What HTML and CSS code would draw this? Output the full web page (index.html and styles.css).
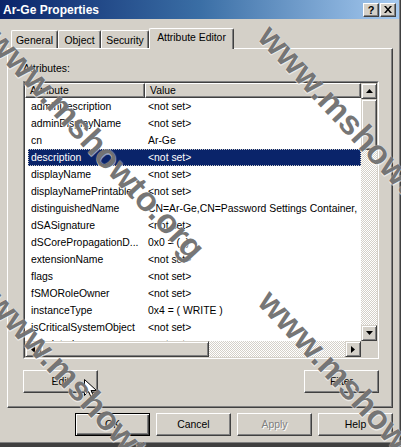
FILE: index.html
```html
<!DOCTYPE html>
<html>
<head>
<meta charset="utf-8">
<title>Ar-Ge Properties</title>
<link rel="stylesheet" href="styles.css">
</head>
<body>
<div class="window">
  <div class="titlebar">
    <span class="title">Ar-Ge Properties</span>
    <div class="caption-buttons">
      <div class="cap-btn cap-help">?</div>
      <div class="cap-btn"><svg width="8" height="7" viewBox="0 0 8 7"><path d="M0 0h2l2 2.5L6 0h2L5 3.5 8 7H6L4 4.5 2 7H0l3-3.5z" fill="#000"/></svg></div>
    </div>
  </div>

  <div class="tabs">
    <div class="tab tab-general">General</div>
    <div class="tab tab-object">Object</div>
    <div class="tab tab-security">Security</div>
    <div class="tab tab-attr active">Attribute Editor</div>
  </div>

  <div class="panel">
    <div class="label">Attributes:</div>
    <div class="listbox">
      <div class="lv">
        <div class="lv-main">
          <div class="lv-header">
            <div class="hcol hcol-attr">Attribute</div>
            <div class="hcol hcol-value">Value</div>
          </div>
          <div class="lv-rows">
            <div class="row"><span class="c1">adminDescription</span><span class="c2">&lt;not set&gt;</span></div>
            <div class="row"><span class="c1">adminDisplayName</span><span class="c2">&lt;not set&gt;</span></div>
            <div class="row"><span class="c1">cn</span><span class="c2">Ar-Ge</span></div>
            <div class="row selected"><span class="c1">description</span><span class="c2">&lt;not set&gt;</span></div>
            <div class="row"><span class="c1">displayName</span><span class="c2">&lt;not set&gt;</span></div>
            <div class="row"><span class="c1">displayNamePrintable</span><span class="c2">&lt;not set&gt;</span></div>
            <div class="row"><span class="c1">distinguishedName</span><span class="c2">CN=Ar-Ge,CN=Password Settings Container,</span></div>
            <div class="row"><span class="c1">dSASignature</span><span class="c2">&lt;not set&gt;</span></div>
            <div class="row"><span class="c1">dSCorePropagationD...</span><span class="c2">0x0 = (&nbsp;&nbsp;)</span></div>
            <div class="row"><span class="c1">extensionName</span><span class="c2">&lt;not set&gt;</span></div>
            <div class="row"><span class="c1">flags</span><span class="c2">&lt;not set&gt;</span></div>
            <div class="row"><span class="c1">fSMORoleOwner</span><span class="c2">&lt;not set&gt;</span></div>
            <div class="row"><span class="c1">instanceType</span><span class="c2">0x4 = ( WRITE )</span></div>
            <div class="row"><span class="c1">isCriticalSystemObject</span><span class="c2">&lt;not set&gt;</span></div>
            <div class="row"><span class="c1">isDeleted</span><span class="c2">&lt;not set&gt;</span></div>
          </div>
        </div>
        <div class="vscroll">
          <div class="sb-btn"><svg width="7" height="4" viewBox="0 0 7 4"><path d="M3.5 0L7 4H0z" fill="#000"/></svg></div>
          <div class="sb-thumb v-thumb"></div>
          <div class="sb-track"></div>
          <div class="sb-btn"><svg width="7" height="4" viewBox="0 0 7 4"><path d="M0 0h7L3.5 4z" fill="#000"/></svg></div>
        </div>
        <div class="hscroll">
          <div class="sb-btn"><svg width="4" height="7" viewBox="0 0 4 7"><path d="M4 0v7L0 3.5z" fill="#000"/></svg></div>
          <div class="sb-thumb h-thumb"></div>
          <div class="sb-track"></div>
          <div class="sb-btn"><svg width="4" height="7" viewBox="0 0 4 7"><path d="M0 0l4 3.5L0 7z" fill="#000"/></svg></div>
        </div>
        <div class="corner"></div>
      </div>
    </div>
    <div class="panel-buttons">
      <div class="btn">Edit</div>
      <div class="btn">Filter</div>
    </div>
  </div>

  <div class="dialog-buttons">
    <div class="btn default">OK</div>
    <div class="btn">Cancel</div>
    <div class="btn disabled">Apply</div>
    <div class="btn">Help</div>
  </div>
</div>

<svg class="cursor" width="13" height="21" viewBox="0 0 13 21"><path d="M0.5 0.5v16l4-4 3 6.5 2.5-1-3-6.5h5.5z" fill="#fff" stroke="#000" stroke-width="1"/></svg>

<div class="wm-layer">
  <div class="wm wm1">www.mshowto.org</div>
  <div class="wm wm2">www.mshowto.org</div>
  <div class="wm wm3">www.mshowto.org</div>
  <div class="wm wm4">www.mshowto.org</div>
</div>
</body>
</html>
```

FILE: styles.css
```css
* { box-sizing: border-box; }
html, body { margin: 0; padding: 0; }
body {
  width: 401px;
  height: 447px;
  overflow: hidden;
  position: relative;
  background: #404040;
  font-family: "Liberation Sans", Arial, sans-serif;
  font-size: 10.4px;
  color: #000;
}

.window {
  width: 400px;
  height: 443px;
  background: #d4d0c8;
  border-right: 1px solid #808080;
  border-bottom: 1px solid #808080;
  display: flex;
  flex-direction: column;
}

/* title bar */
.titlebar {
  height: 19px;
  flex: none;
  display: flex;
  align-items: center;
  padding: 0 3px;
  background: linear-gradient(to right, #0a246a 0%, #3a6ea5 50%, #a6caf0 100%);
}
.title {
  color: #fff;
  font-weight: bold;
  font-size: 12px;
}
.caption-buttons {
  margin-left: auto;
  display: flex;
  gap: 1px;
}
.cap-btn {
  width: 16px;
  height: 14px;
  background: #d4d0c8;
  border: 1px solid;
  border-color: #fff #404040 #404040 #fff;
  box-shadow: inset -1px -1px #808080;
  display: flex;
  align-items: center;
  justify-content: center;
}
.cap-help {
  font-weight: bold;
  font-size: 11px;
  line-height: 12px;
}

/* tabs */
.tabs {
  height: 20px;
  margin-top: 9px;
  flex: none;
  display: flex;
  align-items: flex-end;
  padding-left: 11px;
}
.tab {
  height: 18px;
  padding-top: 2px;
  line-height: 15px;
  text-align: center;
  border-top: 1px solid #fff;
  border-left: 1px solid #fff;
  border-right: 1px solid #404040;
  border-top-left-radius: 2px;
  border-top-right-radius: 2px;
  box-shadow: inset -1px 0 #808080;
  background: #d4d0c8;
  white-space: nowrap;
}
.tab-general { width: 47px; }
.tab-object { width: 43px; }
.tab-security { width: 48px; }
.tab-attr { width: 85px; }
.tab.active {
  height: 21px;
  margin-bottom: -1px;
  padding-top: 2px;
  line-height: 13px;
  position: relative;
  z-index: 2;
}

/* panel */
.panel {
  width: 386px;
  height: 360px;
  margin-left: 7px;
  flex: none;
  border: 1px solid;
  border-color: #fff #404040 #404040 #fff;
  box-shadow: inset -1px -1px #808080;
  padding: 13px 13px 0 15px;
  position: relative;
  z-index: 1;
}
.label {
  height: 13px;
  line-height: 13px;
}
.listbox {
  margin-top: 6px;
  width: 356px;
  height: 278px;
  border: 1px solid;
  border-color: #808080 #fff #fff #808080;
}
.lv {
  width: 100%;
  height: 100%;
  border: 1px solid;
  border-color: #404040 #d4d0c8 #d4d0c8 #404040;
  background: #fff;
  display: grid;
  grid-template-columns: 1fr 16px;
  grid-template-rows: 1fr 16px;
}
.lv-main {
  overflow: hidden;
  min-width: 0;
}
.lv-header {
  display: flex;
  height: 15px;
  width: 100%;
}
.hcol {
  height: 15px;
  line-height: 13px;
  padding-left: 4px;
  background: #d4d0c8;
  border: 1px solid;
  border-color: #fff #404040 #404040 #fff;
  box-shadow: inset -1px -1px #808080;
  white-space: nowrap;
}
.hcol-attr { width: 120px; flex: none; }
.hcol-value { flex: 1; }

.lv-rows { overflow: hidden; }
.row {
  display: flex;
  height: 17px;
  line-height: 17px;
  margin-left: 3px;
  white-space: nowrap;
}
.row .c1 {
  width: 115px;
  flex: none;
  padding-left: 3px;
}
.row .c2 {
  padding-left: 5px;
  flex: 1;
}
.row.selected {
  background: #0a246a;
  color: #fff;
  outline: 1px dotted #c8c8c8;
  outline-offset: -1px;
}

/* scrollbars */
.vscroll {
  display: flex;
  flex-direction: column;
  background: #d4d0c8;
}
.hscroll {
  display: flex;
  background: #d4d0c8;
}
.sb-btn {
  width: 16px;
  height: 16px;
  flex: none;
  background: #d4d0c8;
  border: 1px solid;
  border-color: #d4d0c8 #404040 #404040 #d4d0c8;
  box-shadow: inset 1px 1px #fff, inset -1px -1px #808080;
  display: flex;
  align-items: center;
  justify-content: center;
}
.sb-thumb {
  flex: none;
  background: #d4d0c8;
  border: 1px solid;
  border-color: #d4d0c8 #404040 #404040 #d4d0c8;
  box-shadow: inset 1px 1px #fff, inset -1px -1px #808080;
}
.v-thumb { height: 51px; }
.h-thumb { width: 168px; }
.sb-track {
  flex: 1;
  background: repeating-conic-gradient(#fff 0 25%, #d4d0c8 0 50%) 0 0 / 2px 2px;
}
.corner { background: #d4d0c8; }

/* buttons */
.panel-buttons {
  margin-top: 11px;
  display: flex;
  justify-content: space-between;
  width: 356px;
}
.btn {
  width: 75px;
  height: 23px;
  background: #d4d0c8;
  border: 1px solid;
  border-color: #fff #404040 #404040 #fff;
  box-shadow: inset -1px -1px #808080;
  display: flex;
  align-items: center;
  justify-content: center;
  white-space: nowrap;
}
.btn.default {
  border-color: #000;
  box-shadow: inset 1px 1px #fff, inset -1px -1px #404040, inset -2px -2px #808080;
}
.btn.disabled {
  color: #808080;
  text-shadow: 1px 1px #fff;
}
.dialog-buttons {
  margin-top: 5px;
  display: flex;
  justify-content: flex-end;
  gap: 6px;
  padding-right: 6px;
}

/* overlays */
.cursor {
  position: absolute;
  left: 84px;
  top: 379px;
  z-index: 5;
}
.wm-layer {
  position: absolute;
  left: 0;
  top: 0;
  width: 401px;
  height: 447px;
  overflow: hidden;
  z-index: 10;
  pointer-events: none;
}
.wm {
  position: absolute;
  font-family: "Liberation Sans", Arial, sans-serif;
  font-weight: bold;
  font-size: 34px;
  line-height: 34px;
  height: 34px;
  white-space: nowrap;
  color: rgba(80, 80, 80, 0.78);
  text-shadow: 0 0 1px rgba(255,255,255,0.9), 1px 1px 0 rgba(255,255,255,0.5);
  transform-origin: 0 50%;
  transform: rotate(47deg);
}
.wm1 { left: -6px; top: 17px; }
.wm2 { left: 265px; top: 13px; }
.wm3 { left: -6px; top: 279px; }
.wm4 { left: 265px; top: 278px; }
```
